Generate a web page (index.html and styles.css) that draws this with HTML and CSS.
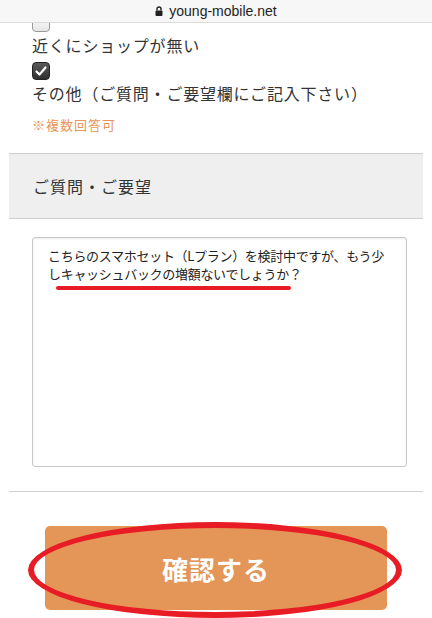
FILE: index.html
```html
<!DOCTYPE html>
<html lang="ja">
<head>
  <meta charset="UTF-8" />
  <meta name="viewport" content="width=device-width, initial-scale=1.0"/>
  <title>お問い合わせ</title>
  <link rel="stylesheet" href="styles.css">
</head>
<body>

<div class="urlbar">
  <svg class="lock" width="8" height="10" viewBox="0 0 8 10">
    <path d="M2 4.5V3a2 2 0 0 1 4 0v1.5" fill="none" stroke="#222" stroke-width="1.4"/>
    <rect x="0.5" y="4.5" width="7" height="5.5" rx="1" fill="#222"/>
  </svg>
  <span>young-mobile.net</span>
</div>

<main class="form">
  <div class="choices">
    <label class="choice">
      <span class="box"></span>
      <span class="choice-text">近くにショップが無い</span>
    </label>
    <label class="choice">
      <span class="box checked">
        <svg width="14" height="14" viewBox="0 0 14 14">
          <path d="M2.5 7.5l3 3 6-7" fill="none" stroke="#fff" stroke-width="2.2" stroke-linecap="round" stroke-linejoin="round"/>
        </svg>
      </span>
      <span class="choice-text">その他（ご質問・ご要望欄にご記入下さい）</span>
    </label>
  </div>
  <p class="note">※複数回答可</p>

  <div class="section-head">ご質問・ご要望</div>

  <div class="field">
    <div class="textarea">こちらのスマホセット（Lプラン）を検討中ですが、もう少<br>しキャッシュバックの増額ないでしょうか？</div>
    <span class="mark-line"></span>
  </div>

  <div class="actions">
    <button class="submit">確認する</button>
    <span class="mark-ring"></span>
  </div>
</main>

</body>
</html>
```

FILE: styles.css
```css
* { box-sizing: border-box; }

body {
  margin: 0;
  background: #fff;
  font-family: "Noto Sans CJK JP", "Noto Sans", sans-serif;
  color: #333;
}

/* アドレスバー（上に重なる） */
.urlbar {
  position: fixed;
  top: 0;
  left: 0;
  right: 0;
  z-index: 2;
  height: 23px;
  background: #f7f7f7;
  border-bottom: 1px solid #dcdcdc;
  display: flex;
  align-items: center;
  justify-content: center;
  gap: 6px;
  font-family: "Liberation Sans", Arial, sans-serif;
  font-size: 14px;
  color: #222;
}

.lock { margin-top: -1px; }

.form {
  padding: 0 9px;
  overflow: hidden;
}

.choices {
  padding: 14px 0 0 23px;
}

.choice {
  display: block;
  margin-bottom: 5px;
}

.box {
  display: flex;
  align-items: center;
  justify-content: center;
  width: 18px;
  height: 18px;
  margin-bottom: 1px;
  border: 1px solid #9a9a9a;
  border-radius: 4px;
  background: linear-gradient(#fdfdfd, #e6e6e6);
}

.box.checked {
  border-color: #222;
  background: linear-gradient(#5a5a5a, #2f2f2f);
}

.choice-text {
  display: block;
  font-size: 16px;
  line-height: 24px;
  letter-spacing: 0.8px;
  color: #333;
}

.note {
  margin: 10px 0 18px 23px;
  font-size: 13px;
  line-height: 20px;
  letter-spacing: 1px;
  color: #e8955a;
}

.section-head {
  height: 66px;
  line-height: 64px;
  padding-left: 24px;
  background: #efefef;
  border-top: 1px solid #cfcfcf;
  border-bottom: 1px solid #cfcfcf;
  font-size: 16px;
  letter-spacing: 1px;
  color: #333;
}

.field {
  position: relative;
  margin: 18px 16px 0 23px;
}

.textarea {
  height: 230px;
  padding: 9px 10px 8px 15px;
  border: 1px solid #c8c8c8;
  border-radius: 3px;
  box-shadow: inset 0 1px 2px rgba(0,0,0,0.08);
  font-size: 13px;
  line-height: 18px;
  letter-spacing: -0.3px;
  color: #222;
}

.mark-line {
  position: absolute;
  left: 24px;
  top: 49px;
  width: 235px;
  height: 4px;
  border-radius: 2px;
  background: #e81c24;
}

.actions {
  position: relative;
  margin-top: 24px;
  border-top: 1px solid #d0d0d0;
  padding: 34px 0 10px 36px;
}

.submit {
  display: block;
  width: 342px;
  height: 84px;
  border: none;
  border-radius: 5px;
  background: #e39657;
  color: #fff;
  font-family: "Noto Sans CJK JP", sans-serif;
  font-size: 26px;
  font-weight: bold;
  letter-spacing: 1px;
}

.mark-ring {
  position: absolute;
  left: 19px;
  top: 30px;
  width: 374px;
  height: 96px;
  border: 6px solid #e81c24;
  border-radius: 50%;
}
```
